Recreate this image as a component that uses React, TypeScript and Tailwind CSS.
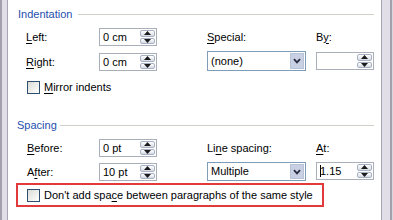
import React from 'react';

// Paragraph dialog, Indents and Spacing panel (XP style)

const Acc: React.FC<{ pre?: string; u: string; post?: string }> = ({ pre = '', u, post = '' }) => (
    <span className="whitespace-pre">
        {pre}
        <span className="underline underline-offset-[2px]">{u}</span>
        {post}
    </span>
);

const GroupHeader: React.FC<{ title: string; pad: string; gap: string; top: string }> = ({ title, pad, gap, top }) => (
    <div className={`flex items-center h-[14px] ${top} ${pad}`}>
        <span className="text-[#1f4fae] leading-none">{title}</span>
        <div className={`flex-1 h-px bg-[#d0d0c8] ${gap}`}></div>
    </div>
);

const Arrow: React.FC<{ up?: boolean }> = ({ up }) => (
    <svg width="7" height="4" viewBox="0 0 7 4">
        {up ? <polygon points="0,4 3.5,0 7,4" fill="#1a1a1a" /> : <polygon points="0,0 3.5,4 7,0" fill="#1a1a1a" />}
    </svg>
);

const Spinner: React.FC = () => (
    <div className="flex flex-col gap-px h-full py-px pr-px">
        <div className="flex-1 w-[15px] flex items-center justify-center rounded-[2px] border border-[#a8b1c2] bg-gradient-to-b from-white to-[#d5dae4]">
            <Arrow up />
        </div>
        <div className="flex-1 w-[15px] flex items-center justify-center rounded-[2px] border border-[#a8b1c2] bg-gradient-to-b from-white to-[#d5dae4]">
            <Arrow />
        </div>
    </div>
);

const SpinBox: React.FC<{ value?: string; caret?: boolean; className?: string }> = ({ value = '', caret, className = '' }) => (
    <div className={`w-[58px] h-[18px] border border-[#a9afb8] bg-white flex items-center justify-between ${className}`}>
        <span className="pl-[3px] flex items-center leading-none">
            {caret && <span className="inline-block w-px h-[12px] bg-black mr-[-1px]"></span>}
            {value}
        </span>
        <Spinner />
    </div>
);

const Combo: React.FC<{ value: string; h: string }> = ({ value, h }) => (
    <div className={`w-[99px] ${h} border border-[#7f9db9] bg-white flex items-center justify-between`}>
        <span className="pl-[3px] leading-none">{value}</span>
        <div className="w-[16px] h-full p-px">
            <div className="w-full h-full flex items-center justify-center border border-[#b9c3d8] bg-[#c9d0e3]">
                <svg width="8" height="6" viewBox="0 0 8 6">
                    <path d="M1 1.2 L4 4.4 L7 1.2" stroke="#2a2a40" strokeWidth="1.8" fill="none" />
                </svg>
            </div>
        </div>
    </div>
);

const CheckBox: React.FC = () => (
    <div className="w-[13px] h-[13px] border border-[#2f4f70] bg-gradient-to-br from-[#dcdcd6] to-white"></div>
);

export default function App() {
    return (
        <div className="flex w-[393px] h-[220px] overflow-hidden text-[11px] text-black font-['Liberation_Sans',Arial,sans-serif]">
            {/* left frame */}
            <div className="w-[8px] h-full flex">
                <div className="w-[2px] bg-[#a3a0ad]"></div>
                <div className="w-[5px] bg-[#e1dee8]"></div>
                <div className="w-px bg-[#a8a6b2]"></div>
            </div>

            <div className="flex-1 bg-white flex flex-col pr-[7px]">
                <GroupHeader title="Indentation" pad="pl-[10px]" gap="ml-[6px]" top="mt-[7px]" />

                <div className="mt-[7px] pl-[18px] grid grid-cols-[73px_108px_109px_58px] grid-rows-[18px_20px] gap-y-[5px]">
                    <div className="self-center"><Acc u="L" post="eft:" /></div>
                    <SpinBox value="0 cm" />
                    <div className="self-center"><Acc u="S" post="pecial:" /></div>
                    <div className="self-center"><Acc pre="B" u="y" post=":" /></div>

                    <div className="self-end h-[18px] flex items-center"><Acc u="R" post="ight:" /></div>
                    <SpinBox value="0 cm" className="self-end" />
                    <Combo value="(none)" h="h-[20px]" />
                    <SpinBox className="self-center" />
                </div>

                <div className="mt-[10px] pl-[19px] flex items-center gap-[4px] h-[13px]">
                    <CheckBox />
                    <Acc u="M" post="irror indents" />
                </div>

                <GroupHeader title="Spacing" pad="pl-[9px]" gap="ml-[3px]" top="mt-[24px]" />

                <div className="mt-[7px] pl-[19px] grid grid-cols-[72px_108px_109px_58px] grid-rows-[18px_19px] gap-y-[5px]">
                    <div className="self-center"><Acc u="B" post="efore:" /></div>
                    <SpinBox value="0 pt" />
                    <div className="self-center"><Acc pre="Li" u="n" post="e spacing:" /></div>
                    <div className="self-center"><Acc u="A" post="t:" /></div>

                    <div className="self-end h-[18px] flex items-center"><Acc pre="A" u="f" post="ter:" /></div>
                    <SpinBox value="10 pt" className="self-end" />
                    <Combo value="Multiple" h="h-[19px]" />
                    <SpinBox value="1.15" caret className="self-start" />
                </div>

                <div className="mt-[2px] ml-[8px] w-[308px] h-[24px] border-2 border-[#e23a3a] flex items-center pl-[9px] gap-[4px]">
                    <CheckBox />
                    <Acc pre="Don't add spa" u="c" post="e between paragraphs of the same style" />
                </div>
            </div>

            {/* right frame */}
            <div className="w-[12px] h-full flex">
                <div className="w-px bg-[#a8a6b2]"></div>
                <div className="w-[8px] bg-[#e1dee8]"></div>
                <div className="w-[2px] bg-[#a3a0ad]"></div>
                <div className="w-px bg-[#d8d6de]"></div>
            </div>
        </div>
    );
}
